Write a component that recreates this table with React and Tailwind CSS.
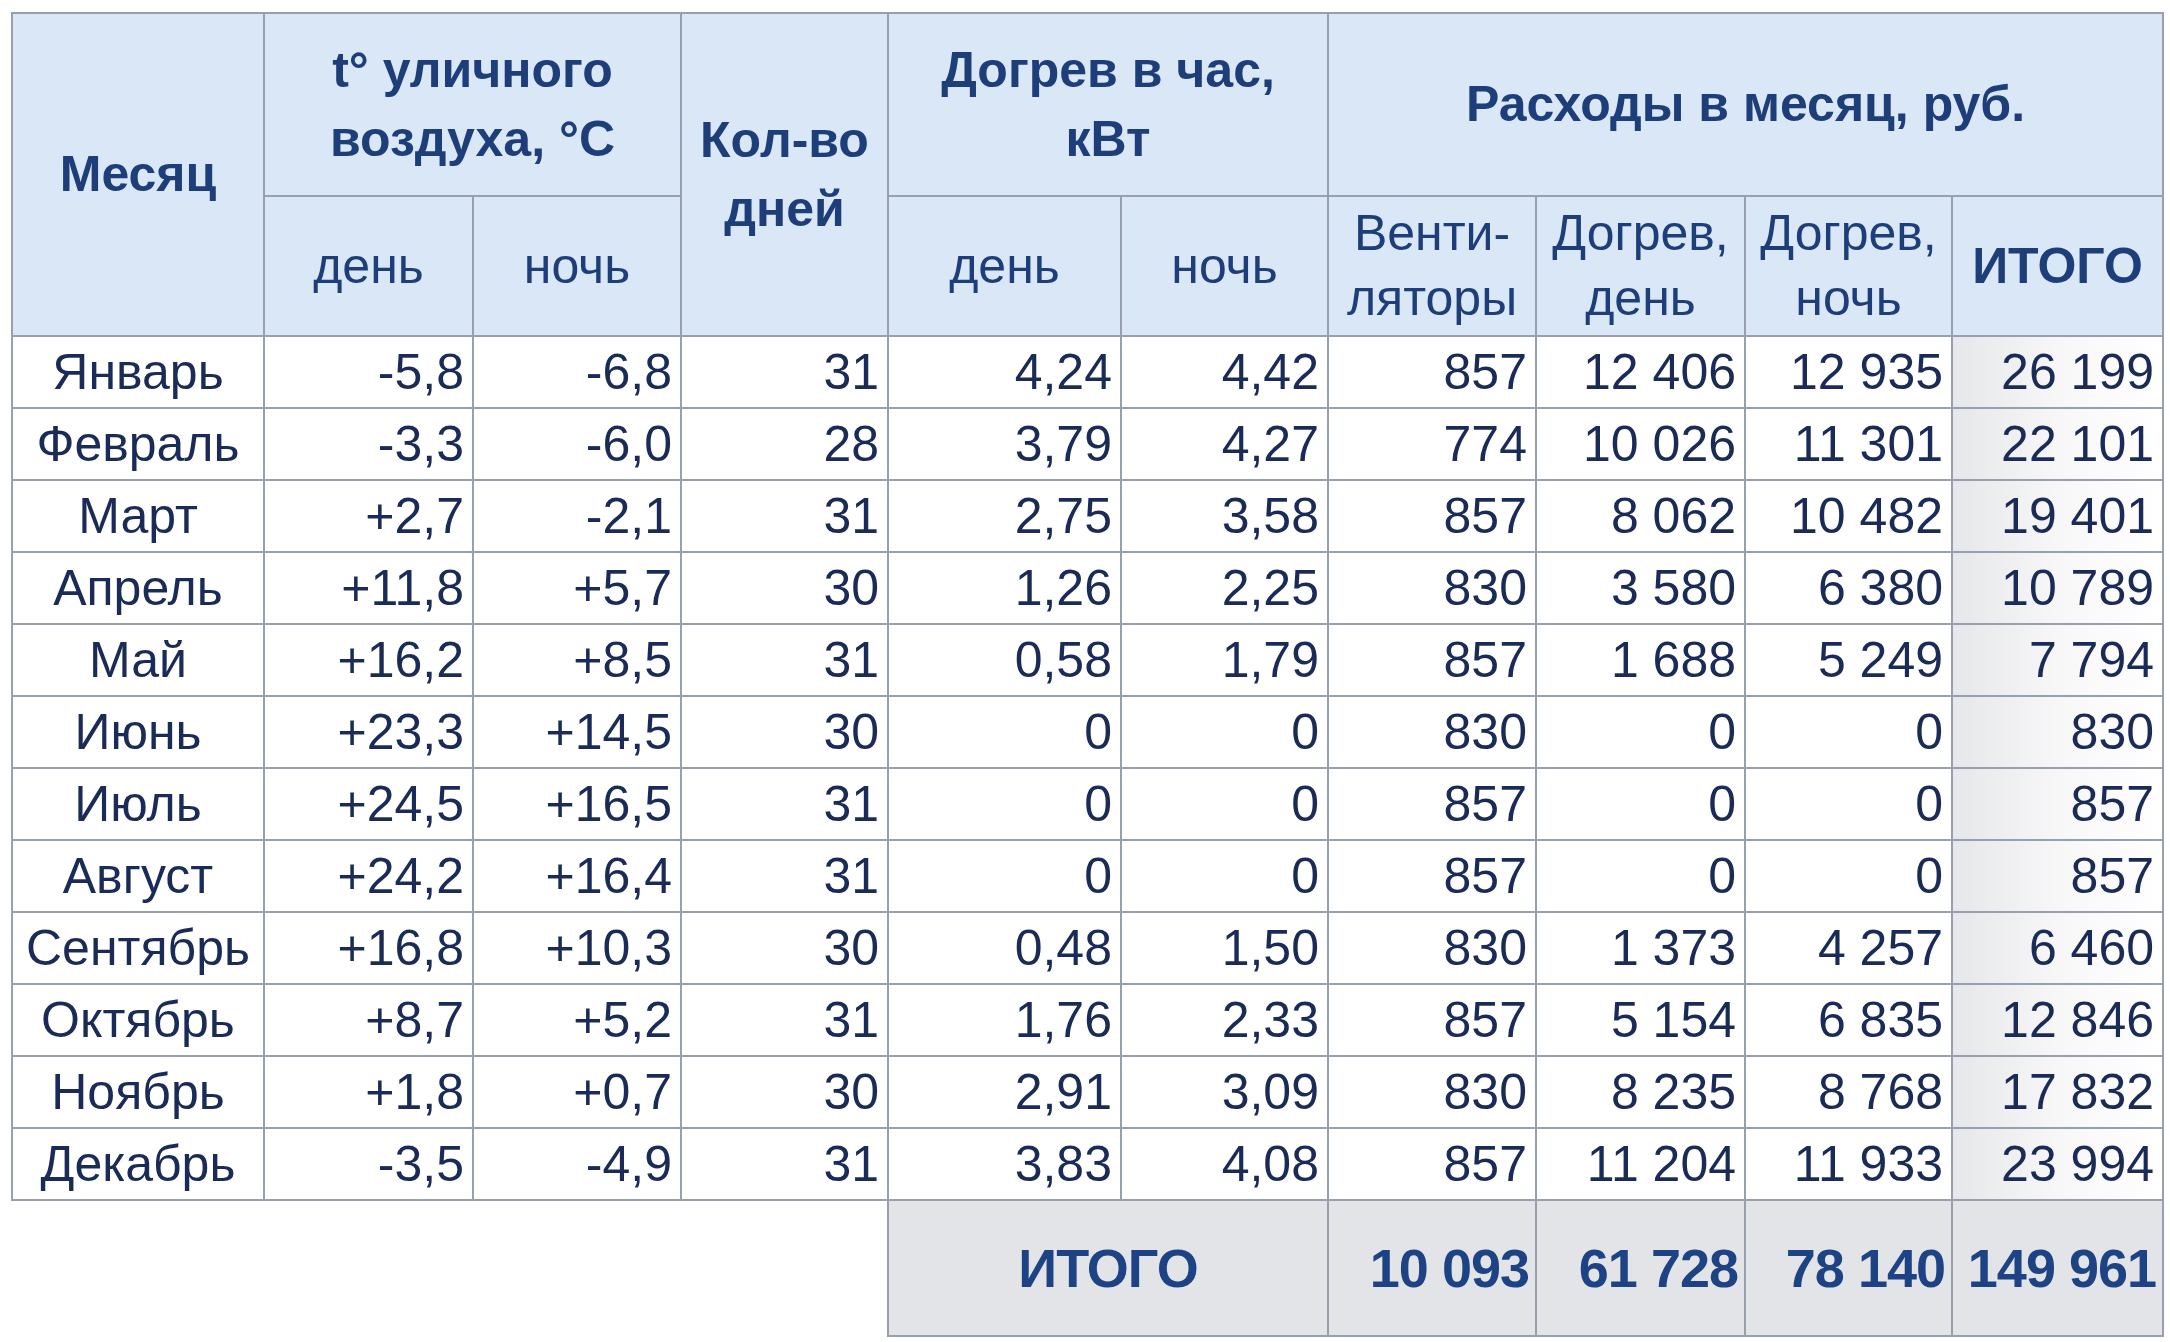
import React from "react";

const rows = [
  ["Январь", "-5,8", "-6,8", "31", "4,24", "4,42", "857", "12 406", "12 935", "26 199"],
  ["Февраль", "-3,3", "-6,0", "28", "3,79", "4,27", "774", "10 026", "11 301", "22 101"],
  ["Март", "+2,7", "-2,1", "31", "2,75", "3,58", "857", "8 062", "10 482", "19 401"],
  ["Апрель", "+11,8", "+5,7", "30", "1,26", "2,25", "830", "3 580", "6 380", "10 789"],
  ["Май", "+16,2", "+8,5", "31", "0,58", "1,79", "857", "1 688", "5 249", "7 794"],
  ["Июнь", "+23,3", "+14,5", "30", "0", "0", "830", "0", "0", "830"],
  ["Июль", "+24,5", "+16,5", "31", "0", "0", "857", "0", "0", "857"],
  ["Август", "+24,2", "+16,4", "31", "0", "0", "857", "0", "0", "857"],
  ["Сентябрь", "+16,8", "+10,3", "30", "0,48", "1,50", "830", "1 373", "4 257", "6 460"],
  ["Октябрь", "+8,7", "+5,2", "31", "1,76", "2,33", "857", "5 154", "6 835", "12 846"],
  ["Ноябрь", "+1,8", "+0,7", "30", "2,91", "3,09", "830", "8 235", "8 768", "17 832"],
  ["Декабрь", "-3,5", "-4,9", "31", "3,83", "4,08", "857", "11 204", "11 933", "23 994"],
];

const totals = ["10 093", "61 728", "78 140", "149 961"];

const widths = [252, 209, 208, 207, 233, 207, 208, 209, 207, 211];

// header cell styles
const th = "border-2 border-[#97a0ac] bg-[#d9e7f7] text-[#1d3e78] text-center align-middle p-0";
const td = "border-2 border-[#97a0ac] text-[#1b2b57] whitespace-nowrap p-0";

const App = () => {
  return (
    <div className="w-[2170px] h-[1342px] bg-white pl-[11px] pt-[12px]">
      <table
        className="border-collapse table-fixed w-[2151px] text-[50px]"
        style={{ fontFamily: '"Liberation Sans", Arial, sans-serif' }}
      >
        <colgroup>
          {widths.map((w, i) => (
            <col key={i} style={{ width: w }} />
          ))}
        </colgroup>
        <thead>
          <tr className="h-[183px]">
            <th rowSpan={2} className={`${th} font-bold leading-[69px]`}>
              Месяц
            </th>
            <th colSpan={2} className={`${th} font-bold leading-[69px]`}>
              t° уличного
              <br />
              воздуха, °C
            </th>
            <th rowSpan={2} className={`${th} font-bold leading-[69px]`}>
              Кол-во
              <br />
              дней
            </th>
            <th colSpan={2} className={`${th} font-bold leading-[69px]`}>
              Догрев в час,
              <br />
              кВт
            </th>
            <th colSpan={4} className={`${th} font-bold leading-[69px]`}>
              Расходы в месяц, руб.
            </th>
          </tr>
          <tr className="h-[140px]">
            <th className={`${th} font-normal`}>день</th>
            <th className={`${th} font-normal`}>ночь</th>
            <th className={`${th} font-normal`}>день</th>
            <th className={`${th} font-normal`}>ночь</th>
            <th className={`${th} font-normal leading-[65px]`}>
              Венти-
              <br />
              ляторы
            </th>
            <th className={`${th} font-normal leading-[65px]`}>
              Догрев,
              <br />
              день
            </th>
            <th className={`${th} font-normal leading-[65px]`}>
              Догрев,
              <br />
              ночь
            </th>
            <th className={`${th} font-bold`}>ИТОГО</th>
          </tr>
        </thead>
        <tbody>
          {rows.map((r) => (
            <tr key={r[0]} className="h-[72px] leading-none">
              {r.map((v, i) => (
                <td
                  key={i}
                  className={
                    i === 0
                      ? `${td} text-center bg-white`
                      : i === 9
                      ? `${td} text-right pr-[8px] bg-gradient-to-r from-[#e6e7ea] via-[#f7f7f8] to-white`
                      : `${td} text-right pr-[8px] bg-white`
                  }
                >
                  {v}
                </td>
              ))}
            </tr>
          ))}
          <tr className="h-[136px] leading-none text-[54px] tracking-[-1px]">
            <td colSpan={4} className="p-0 bg-white" />
            <td
              colSpan={2}
              className="border-2 border-[#97a0ac] bg-[#e3e4e7] text-[#1d4384] font-bold text-center p-0"
            >
              ИТОГО
            </td>
            {totals.map((v, i) => (
              <td
                key={i}
                className="border-2 border-[#97a0ac] border-l-[#b9c6dc] bg-[#e3e4e7] text-[#1d4384] font-bold text-right pr-[6px] whitespace-nowrap p-0"
              >
                {v}
              </td>
            ))}
          </tr>
        </tbody>
      </table>
    </div>
  );
};

export default App;
